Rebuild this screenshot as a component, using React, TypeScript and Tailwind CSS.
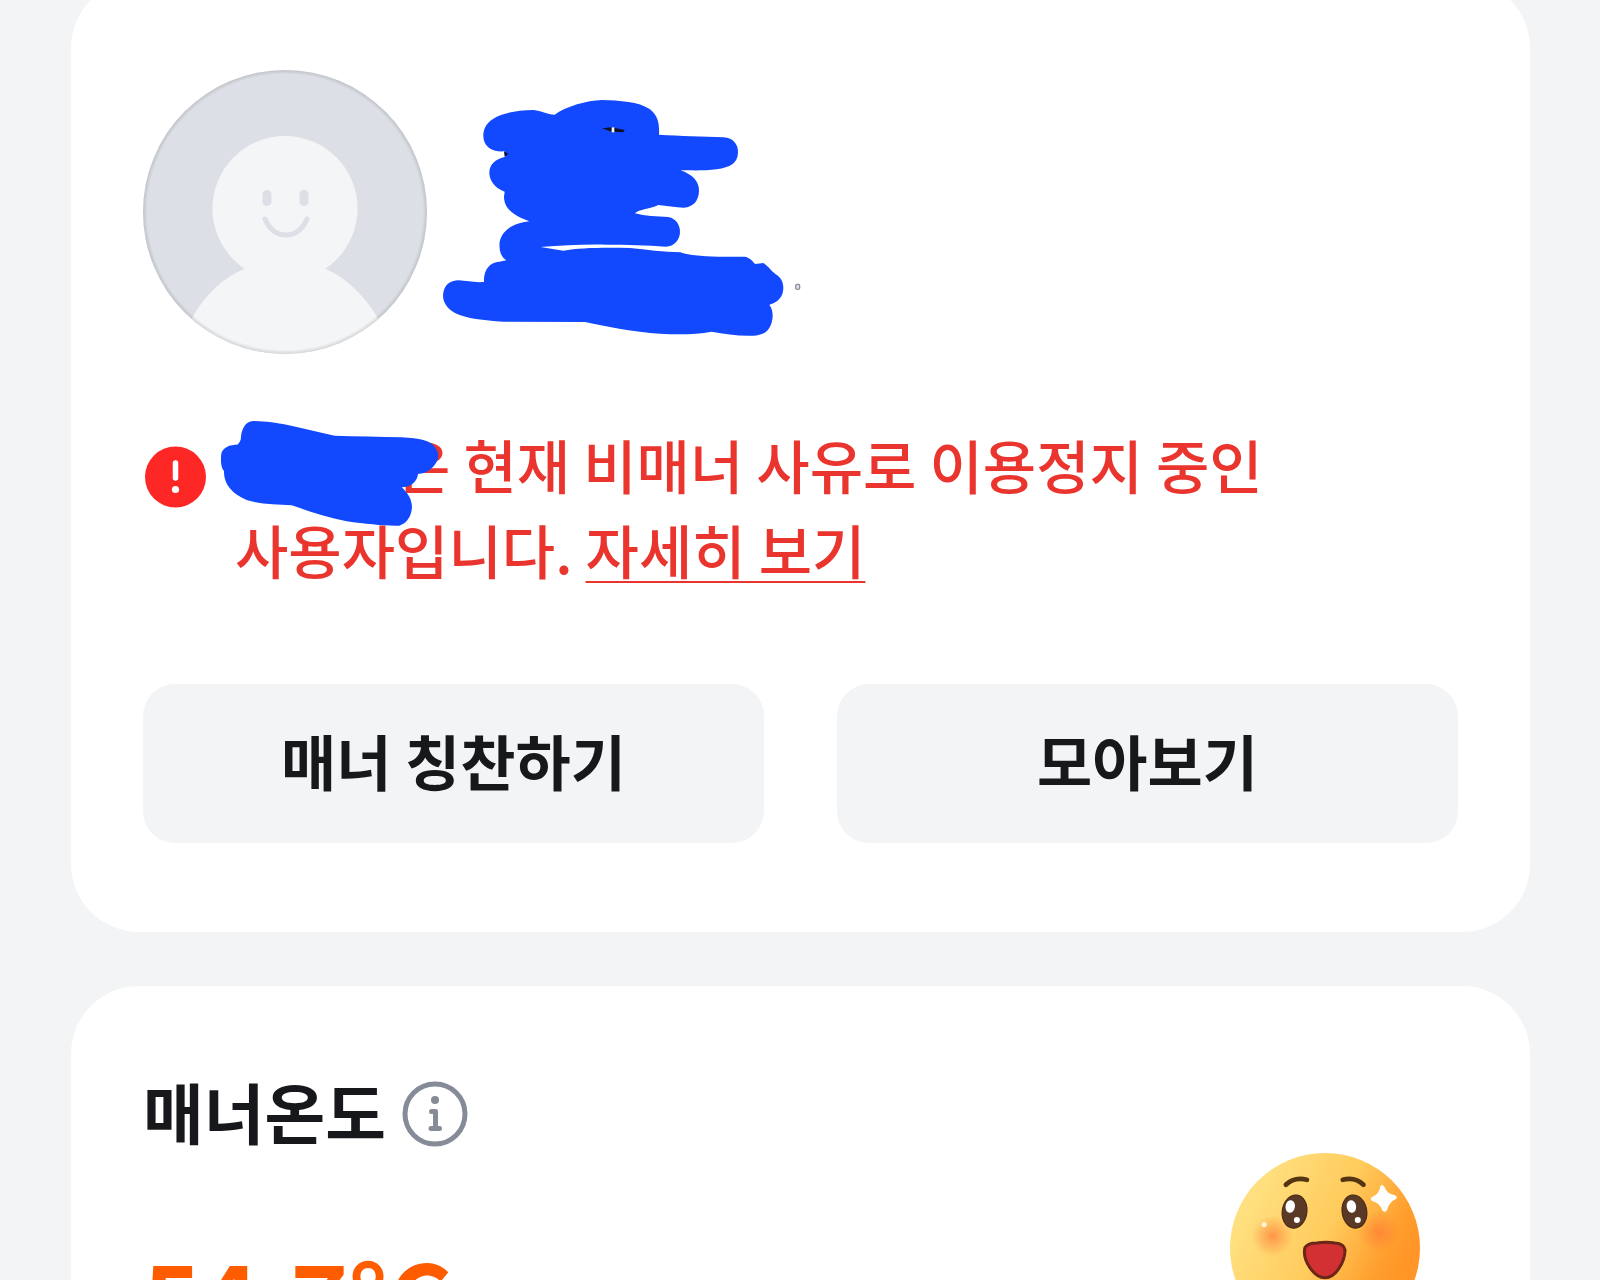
import type { ReactNode } from "react";

function Card({ children, className }: { children: ReactNode; className?: string }) {
  return <section className={`rounded-[68px] bg-white px-[72px] ${className ?? ""}`}>{children}</section>;
}

function Avatar() {
  return (
    <svg className="h-[284px] w-[284px] shrink-0" viewBox="0 0 284 284" role="img" aria-label="프로필">
      <defs>
        <clipPath id="avatar-clip">
          <circle cx="142" cy="142" r="142" />
        </clipPath>
        <radialGradient id="avatar-rim">
          <stop offset="0.97" stopColor="#000000" stopOpacity="0" />
          <stop offset="1" stopColor="#000000" stopOpacity="0.13" />
        </radialGradient>
      </defs>
      <g clipPath="url(#avatar-clip)">
        <rect width="284" height="284" fill="#dce0e6" />
        <circle cx="142" cy="138.500" r="72.5" fill="#f4f5f7" />
        <path d="M101 199 Q142 182 183 199 Q214 213 236 250 L250 284 H34 L48 250 Q68 213 101 199Z" fill="#f4f5f7" />
      </g>
      <rect x="119.500" y="120" width="9" height="16" rx="4.500" fill="#dce0e6" />
      <rect x="156.500" y="120" width="9" height="16" rx="4.500" fill="#dce0e6" />
      <path d="M122 149 Q129 165 143 165 Q157 165 164 149" fill="none" stroke="#dce0e6" strokeWidth="5" strokeLinecap="round" />
      <circle cx="142" cy="142" r="142" fill="url(#avatar-rim)" />
    </svg>
  );
}

function NameScribble() {
  return (
    <svg className="h-[284px] w-[403px]" viewBox="-9 -30 1209 852" aria-hidden="true">
      <path
        fill="#1249ff"
        d="M160 168 C160 110 230 92 310 90 C335 93 350 103 374 104 C410 78 470 62 515 60 C570 62 625 64 660 88 C688 110 688 140 687 164 C750 168 820 169 880 172 C912 174 924 195 924 216 C924 250 900 262 860 268 C825 273 780 271 752 271 C790 285 807 305 807 332 C807 362 788 382 762 383 C735 382 710 378 685 375 C665 386 625 388 615 400 C645 408 680 410 715 411 C738 416 750 434 750 455 C750 480 732 499 708 500 C650 495 590 494 530 494 C460 492 400 497 332 501 L400 512 C450 503 520 502 600 504 C650 508 700 517 752 517 C780 530 870 531 945 530 C962 534 968 545 976 552 L1000 549 C1015 558 1022 572 1036 582 C1053 592 1060 606 1060 624 C1060 652 1042 668 1018 674 C1026 685 1028 695 1028 710 C1025 745 1008 766 970 767 C925 769 885 761 845 755 C800 763 750 764 690 761 C610 756 530 740 465 726 L220 725 C160 721 110 716 75 699 C48 684 39 665 39 645 C42 614 60 602 86 601 C110 602 130 608 162 606 C160 568 180 547 208 545 L229 541 C210 530 207 505 209 485 C218 445 255 430 298 424 C260 410 222 390 222 350 L224 335 C193 323 178 300 178 278 C178 253 197 236 226 230 L224 214 C187 217 160 200 160 168Z"
      />
      <path d="M516 145 L545 142 L584 150 L580 157 L545 155Z" fill="#10122b" />
      <rect x="545" y="142" width="8" height="15" fill="#ffffff" />
      <path d="M222 214 L235 222 L224 230Z" fill="#10122b" />
      <rect x="1097" y="613" width="12" height="15" rx="4" fill="#d8dbe2" stroke="#8c929f" strokeWidth="4" />
    </svg>
  );
}

function NicknameScribble() {
  return (
    <svg className="absolute -left-3.5 -top-px h-[105px] w-[218px]" viewBox="273 63 654 315" aria-hidden="true">
      <path
        fill="#1249ff"
        d="M333 108 C337 80 350 63 372 63 C410 64 440 69 470 74 C520 84 565 97 614 107 C680 109 750 110 815 112 C870 115 900 120 915 142 C927 158 927 170 921 184 C908 207 890 221 864 222 C862 245 842 262 815 262 C835 280 846 300 846 322 C844 350 830 370 808 377 C760 378 710 372 650 364 C590 352 535 333 485 316 C440 312 390 313 350 300 C305 282 280 250 282 213 C271 202 270 165 277 153 C286 140 300 134 322 134 C333 124 333 115 333 108Z"
      />
    </svg>
  );
}

function AlertIcon() {
  return (
    <svg className="mt-6 h-[62px] w-[62px] shrink-0" viewBox="0 0 62 62" aria-hidden="true">
      <circle cx="30.500" cy="31" r="30.500" fill="#fd2825" />
      <path d="M30.500 17V32" stroke="#ffffff" strokeWidth="5.500" strokeLinecap="round" />
      <circle cx="30.500" cy="43.500" r="3.600" fill="#ffffff" />
    </svg>
  );
}

function InfoIcon() {
  return (
    <svg className="h-[66px] w-[66px]" viewBox="0 0 66 66" fill="none" aria-hidden="true">
      <circle cx="33" cy="33" r="30" stroke="#868b98" strokeWidth="5" />
      <circle cx="33" cy="19" r="4" fill="#868b98" />
      <path d="M29.500 30.500H33.500V47M29 47.500H37.500" stroke="#868b98" strokeWidth="5" strokeLinecap="round" strokeLinejoin="round" />
    </svg>
  );
}

function MannerFace() {
  return (
    <svg className="mr-[38px] mt-[167px] h-[190px] w-[190px] shrink-0" viewBox="63 68 568 568" aria-hidden="true">
      <defs>
        <linearGradient id="face" x1="0.1" y1="0.25" x2="0.9" y2="0.65">
          <stop offset="0" stopColor="#ffe080" />
          <stop offset="0.5" stopColor="#ffcb5c" />
          <stop offset="0.85" stopColor="#ff9f2e" />
          <stop offset="1" stopColor="#ff9526" />
        </linearGradient>
        <radialGradient id="blush">
          <stop offset="0" stopColor="#ff7b35" stopOpacity="0.7" />
          <stop offset="1" stopColor="#ff7b35" stopOpacity="0" />
        </radialGradient>
      </defs>
      <circle cx="347" cy="352" r="284" fill="url(#face)" />
      <circle cx="190" cy="316" r="62" fill="url(#blush)" />
      <circle cx="508" cy="304" r="62" fill="url(#blush)" />
      <path d="M230 163 Q254 139 293 148M400 148 Q438 139 462 163" fill="none" stroke="#553511" strokeWidth="14" strokeLinecap="round" />
      <ellipse cx="256" cy="243" rx="37" ry="50" transform="rotate(9 256 243)" fill="#5a3927" stroke="#45250f" strokeWidth="3" />
      <ellipse cx="435" cy="243" rx="37" ry="50" transform="rotate(-9 435 243)" fill="#5a3927" stroke="#45250f" strokeWidth="3" />
      <ellipse cx="243" cy="228" rx="14" ry="19" transform="rotate(9 243 228)" fill="#ffffff" />
      <ellipse cx="426" cy="228" rx="14" ry="19" transform="rotate(-9 426 228)" fill="#ffffff" />
      <circle cx="263" cy="268" r="9" fill="#ffffff" />
      <circle cx="445" cy="268" r="9" fill="#ffffff" />
      <circle cx="165" cy="282" r="8" fill="#fff3d2" />
      <path d="M287 351 Q296 337 322 337 Q350 333 377 337 Q404 339 407 358 C406 395 379 441 347 441 C315 441 278 390 287 351Z" fill="#d33033" stroke="#6b2617" strokeWidth="9" />
      <path d="M515 168 Q518 164 522 170 Q531 194 556 197 Q562 200 557 204 Q536 213 530 238 Q526 244 521 239 Q513 215 489 209 Q484 205 489 202 Q511 194 515 168Z" fill="#ffffff" stroke="#ffffff" strokeWidth="5" strokeLinejoin="round" />
    </svg>
  );
}

export default function App() {
  return (
    <div className="h-screen overflow-hidden bg-[#f3f4f6] pl-[71px] pr-[70px] font-['Noto_Sans_CJK_KR',sans-serif] text-[#17181b]">
      <main className="flex flex-col gap-[54px]">
        <Card className="-mt-5 pb-[89px] pt-[90px]">
          <div className="flex">
            <Avatar />
            <NameScribble />
          </div>

          <div className="ml-0.5 mt-[68px] flex gap-7">
            <AlertIcon />
            <p className="relative text-[58px] font-medium leading-[85px] text-[#e9352d]">
              <span className="inline-block w-[162px]" />
              은 현재 비매너 사유로 이용정지 중인
              <br />
              사용자입니다.{" "}
              <a href="#" className="underline decoration-2 underline-offset-[7px]">
                자세히 보기
              </a>
              <NicknameScribble />
            </p>
          </div>

          <div className="mt-[92px] grid grid-cols-2 gap-[73px]">
            <button type="button" className="h-[159px] rounded-[32px] bg-[#f3f4f6] pb-2 text-[60px] font-bold">
              매너 칭찬하기
            </button>
            <button type="button" className="h-[159px] rounded-[32px] bg-[#f3f4f6] pb-2 text-[60px] font-bold">
              모아보기
            </button>
          </div>
        </Card>

        <Card className="flex justify-between pb-20">
          <div className="pt-[76px]">
            <div className="flex items-center gap-4">
              <h2 className="text-[66px] font-bold leading-[96px]">매너온도</h2>
              <button type="button" aria-label="매너온도 안내" className="pt-2">
                <InfoIcon />
              </button>
            </div>
            <p className="mt-[72px] text-[98px] font-bold leading-[128px] text-[#ff5c00]">54.7°C</p>
          </div>
          <MannerFace />
        </Card>
      </main>
    </div>
  );
}
